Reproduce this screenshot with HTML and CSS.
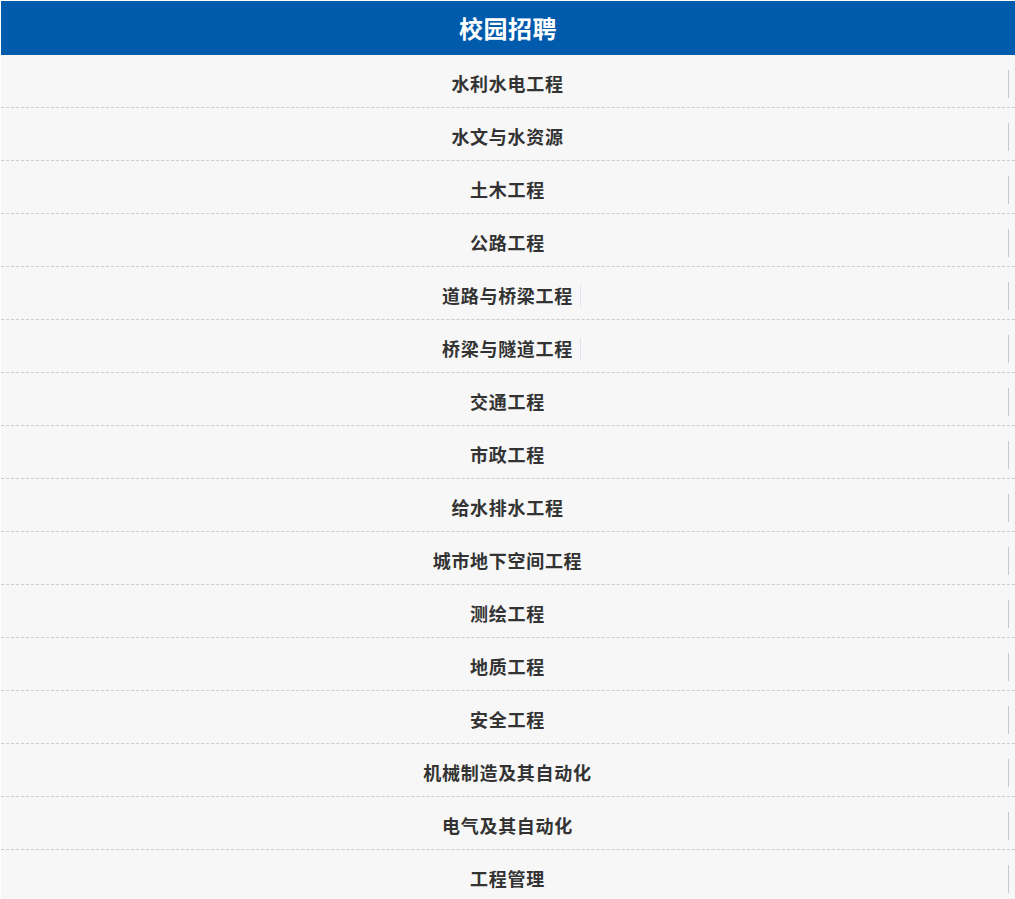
FILE: index.html
```html
<!DOCTYPE html>
<html lang="zh-CN">
<head>
  <meta charset="UTF-8">
  <title>校园招聘</title>
  <link rel="stylesheet" href="styles.css">
</head>
<body>
  <div id="recruit">
    <h2 class="recruit-title">校园招聘</h2>
    <ul class="major-list">
      <li><a href="#">水利水电工程</a></li>
      <li><a href="#">水文与水资源</a></li>
      <li><a href="#">土木工程</a></li>
      <li><a href="#">公路工程</a></li>
      <li><a href="#"><span class="split">道路与桥梁工程</span></a></li>
      <li><a href="#"><span class="split">桥梁与隧道工程</span></a></li>
      <li><a href="#">交通工程</a></li>
      <li><a href="#">市政工程</a></li>
      <li><a href="#">给水排水工程</a></li>
      <li><a href="#">城市地下空间工程</a></li>
      <li><a href="#">测绘工程</a></li>
      <li><a href="#">地质工程</a></li>
      <li><a href="#">安全工程</a></li>
      <li><a href="#">机械制造及其自动化</a></li>
      <li><a href="#">电气及其自动化</a></li>
      <li><a href="#">工程管理</a></li>
    </ul>
  </div>
</body>
</html>
```

FILE: styles.css
```css
html, body {
  margin: 0;
  padding: 0;
  background: #fff;
  font-family: "Noto Sans CJK SC", "Noto Sans", sans-serif;
}
body {
  padding: 1px 0 0 1px;
}
#recruit {
  width: 100%;
}
.recruit-title {
  margin: 0;
  height: 54px;
  line-height: 54px;
  background: #005bac;
  color: #fff;
  font-size: 24px;
  font-weight: bold;
  letter-spacing: 0.5px;
  text-align: center;
}
.major-list {
  list-style: none;
  margin: 0;
  padding: 0;
  background: #f7f7f7;
}
.major-list li {
  padding: 15px 0 9px;
  border-bottom: 1px dashed #ccc;
}
.major-list a {
  display: block;
  height: 28px;
  line-height: 26px;
  margin: 0 6px;
  border-right: 1px solid #c8c8c8;
  color: #333;
  font-size: 18px;
  font-weight: bold;
  letter-spacing: 0.7px;
  text-align: center;
  text-decoration: none;
}
/* stray divider after long names */
.split {
  position: relative;
}
.split::after {
  content: "";
  position: absolute;
  right: -8px;
  top: 3px;
  height: 22px;
  border-right: 1px solid #dbe3ee;
}
```
